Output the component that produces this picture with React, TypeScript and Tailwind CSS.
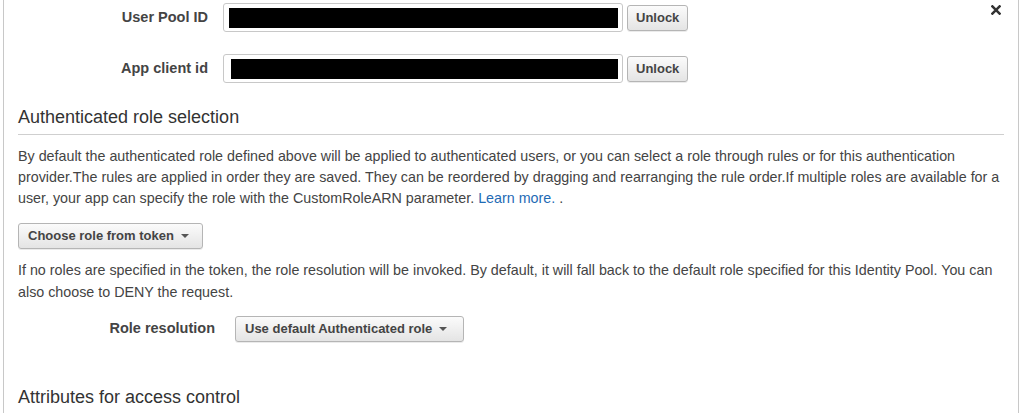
export default function App() {
  const font = { fontFamily: '"Liberation Sans", Arial, Helvetica, sans-serif' };
  const btn =
    "flex items-center rounded-[3px] border border-[#b5b5b5] bg-gradient-to-b from-[#fbfbfb] to-[#e4e4e4] text-[13px] font-bold text-[#444] shadow-[0_1px_0_rgba(0,0,0,0.08)]";
  const caret = (
    <svg width="8" height="4" viewBox="0 0 8 4" className="ml-[7px]">
      <path d="M0 0 L8 0 L4 4 Z" fill="#555" />
    </svg>
  );
  return (
    <div className="h-[413px] w-[1025px] overflow-hidden bg-white" style={font}>
      <div className="relative ml-[3px] h-[413px] w-[1016px] border-x border-[#c8c8c8] text-[#444]">
        <button className="absolute right-[17px] top-[4px] leading-none">
          <svg width="10" height="10" viewBox="0 0 10 10" className="mt-[1px]">
            <path d="M1.4 1.4 L8.6 8.6 M8.6 1.4 L1.4 8.6" stroke="#333" strokeWidth="2.5" strokeLinecap="square" />
          </svg>
        </button>

        <div className="flex flex-col gap-[22px] pt-[3px]">
          {["User Pool ID", "App client id"].map((label, i) => (
            <div key={label} className="flex items-center">
              <div className="w-[204px] shrink-0 text-right text-[14.5px] font-bold text-[#444]">{label}</div>
              <div
                className={`ml-[15px] flex h-[29px] w-[400px] shrink-0 items-center rounded-[3px] border border-[#c8c8c8] bg-white ${
                  i === 0 ? "pl-[5px] pr-[4px]" : "pl-[7px] pr-[4px]"
                }`}
              >
                <div className="h-[20px] flex-1 bg-black" />
              </div>
              <button className={`${btn} ml-[4px] h-[26px] px-[8px]`}>Unlock</button>
            </div>
          ))}
        </div>

        <div className="px-[14px]">
          <h2 className="mt-[24px] border-b border-[#cfcfcf] pb-[7px] text-[18px] font-normal leading-[20px] text-[#333]">
            Authenticated role selection
          </h2>
          <p className="mt-[11px] text-[14.3px] leading-[21px]">
            By default the authenticated role defined above will be applied to authenticated users, or you can select a
            role through rules or for this authentication provider.The rules are applied in order they are saved. They can
            be reordered by dragging and rearranging the rule order.If multiple roles are available for a user, your app
            can specify the role with the CustomRoleARN parameter.{" "}
            <a className="text-[#1f6bb5]" href="#">
              Learn more.
            </a>{" "}
            .
          </p>
          <button className={`${btn} mt-[14px] h-[26px] pl-[9px] pr-[13px]`}>
            Choose role from token
            {caret}
          </button>
          <p className="mt-[10px] text-[14.3px] leading-[22px]">
            If no roles are specified in the token, the role resolution will be invoked. By default, it will fall back to
            the default role specified for this Identity Pool. You can also choose to DENY the request.
          </p>
          <div className="mt-[13px] flex items-center">
            <div className="w-[197px] shrink-0 text-right text-[14.5px] font-bold text-[#444]">Role resolution</div>
            <button className={`${btn} ml-[20px] h-[26px] pl-[9px] pr-[16px]`}>
              Use default Authenticated role
              {caret}
            </button>
          </div>
          <h2 className="mt-[45px] text-[18px] font-normal leading-[20px] text-[#333]">Attributes for access control</h2>
        </div>
      </div>
    </div>
  );
}
